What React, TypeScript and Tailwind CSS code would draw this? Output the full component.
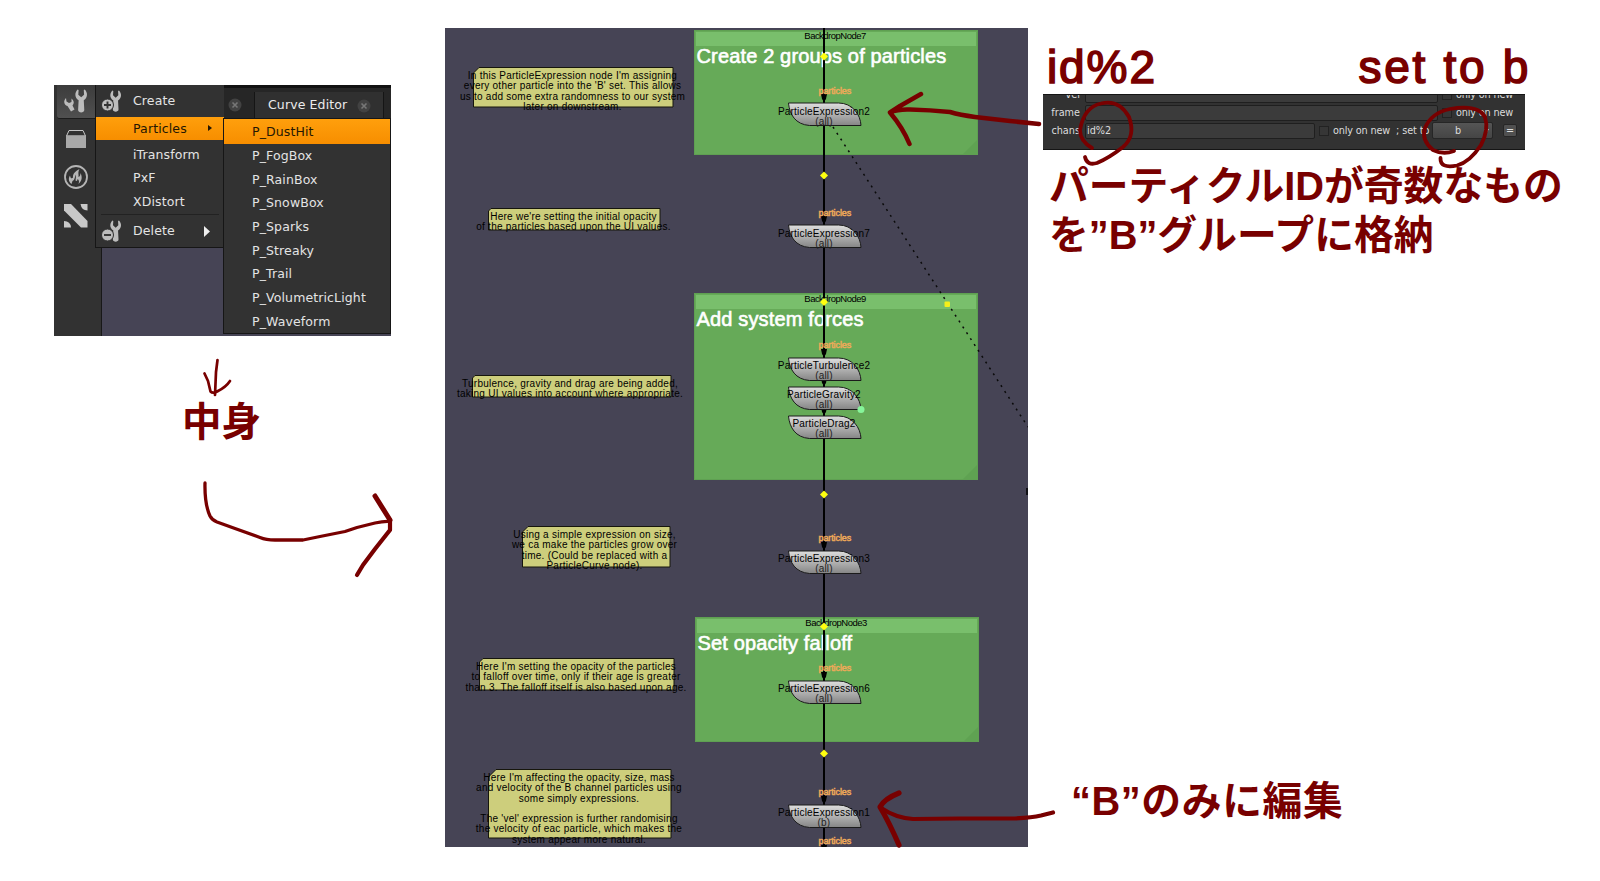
const ink = '#780000';

const submenu = [
  'P_DustHit',
  'P_FogBox',
  'P_RainBox',
  'P_SnowBox',
  'P_Sparks',
  'P_Streaky',
  'P_Trail',
  'P_VolumetricLight',
  'P_Waveform',
];

// canvas coordinates are relative to the node graph's own corner
const backdrops = [
  { name: 'BackdropNode7', title: 'Create 2 groups of particles', x: 249, y: 2, h: 125 },
  { name: 'BackdropNode9', title: 'Add system forces', x: 249, y: 265, h: 187 },
  { name: 'BackdropNode3', title: 'Set opacity falloff', x: 250, y: 589, h: 125 },
];

const notes = [
  {
    x: 28, y: 39, w: 201, h: 41, shift: -1, cut: 6,
    lines: [
      "In this ParticleExpression node I'm assigning",
      "every other particle into the 'B' set. This allows",
      'us to add some extra randomness to our system',
      'later on downstream.',
    ],
  },
  {
    x: 43, y: 180, w: 173, h: 23, shift: -1, cut: 3,
    lines: ["Here we're setting the initial opacity", 'of the particles based upon the UI values.'],
  },
  {
    x: 27, y: 347, w: 200, h: 23, shift: -2, cut: 3,
    lines: ['Turbulence, gravity and drag are being added,', 'taking UI values into account where appropriate.'],
  },
  {
    x: 77, y: 498, w: 149, h: 42, shift: -2, cut: 6,
    lines: ['Using a simple expression on size,', 'we ca make the particles grow over', 'time. (Could be replaced with a', 'ParticleCurve node).'],
  },
  {
    x: 34, y: 630, w: 196, h: 33, shift: -1, cut: 4,
    lines: ["Here I'm setting the opacity of the particles", 'to falloff over time, only if their age is greater', 'than 3. The falloff itself is also based upon age.'],
  },
  {
    x: 43, y: 741, w: 184, h: 70, shift: -1, cut: 8,
    lines: [
      "Here I'm affecting the opacity, size, mass",
      'and velocity of the B channel particles using',
      'some simply expressions.',
      '',
      "The 'vel' expression is further randomising",
      'the velocity of eac particle, which makes the',
      'system appear more natural.',
    ],
  },
];

const nodes = [
  { name: 'ParticleExpression2', channel: '(all)', y: 74, pad: 5 },
  { name: 'ParticleExpression7', channel: '(all)', y: 196, pad: 5 },
  { name: 'ParticleTurbulence2', channel: '(all)', y: 329, pad: 4 },
  { name: 'ParticleGravity2', channel: '(all)', y: 358, pad: 4 },
  { name: 'ParticleDrag2', channel: '(all)', y: 387, pad: 4 },
  { name: 'ParticleExpression3', channel: '(all)', y: 522, pad: 4 },
  { name: 'ParticleExpression6', channel: '(all)', y: 652, pad: 4 },
  { name: 'ParticleExpression1', channel: '(b)', y: 776, pad: 4 },
];

const inputLabels = [63, 185, 317, 510, 640, 764, 813];
const arrowTips = [74, 196, 329, 358, 387, 522, 652, 776, 825];
const wireDots = [28.5, 147.5, 274, 466.5, 598.5, 725.5];

function Wrench({ x, y, s }: { x: number; y: number; s: number }) {
  return (
    <path
      transform={`translate(${x} ${y}) scale(${s})`}
      d="M3 0C0 3 0 8 4 10.500L3.500 20C3.500 23 9.500 23 9.500 20L9 10.500C13 8 13 3 10 0L9 .5 9.300 5 6.500 7.500 3.700 5 4 .5Z"
      fill="#bdbdbd"
    />
  );
}

function ToolIcon({ sign }: { sign: '+' | '-' }) {
  return (
    <svg width="24" height="24" viewBox="0 0 24 24" className="shrink-0">
      <Wrench x={8.5} y={1.5} s={0.95} />
      <circle cx="6.500" cy="16" r="6" fill="#bdbdbd" stroke="#323232" strokeWidth="1" />
      <path d={sign === '+' ? 'M3 16h7M6.500 12.500v7' : 'M3 16h7'} stroke="#323232" strokeWidth="1.900" />
    </svg>
  );
}

function CloseDot() {
  return (
    <svg width="14" height="14" viewBox="0 0 14 14" className="shrink-0">
      <circle cx="7" cy="7" r="6.500" fill="#424242" />
      <path d="M4.500 4.500l5 5M9.500 4.500l-5 5" stroke="#777" strokeWidth="1.600" />
    </svg>
  );
}

function Sidebar() {
  return (
    <div className="flex h-full w-[48px] shrink-0 flex-col items-center border-r border-[#181818] bg-[#323232] pr-[3px]">
      <div className="ml-[6px] flex h-[34px] w-[44px] items-start rounded-b-[3px] border-b border-[#1c1c1c] bg-gradient-to-b from-[#3c3c3c] to-[#505050] pl-[7px] pt-[3px]">
        <svg width="26" height="26" viewBox="0 0 26 26">
          <Wrench x={10.5} y={1.5} s={1.03} />
          <path d="M2 10C-1 13 0 17 3.500 18L7 23.500 10.500 21.500 8.500 17.500C10.500 15.500 10 12.500 7.500 10.500L7.500 14 5 15 2.500 13.500Z" fill="#bdbdbd" />
        </svg>
      </div>
      <svg width="22" height="20" viewBox="0 0 22 20" className="mt-[10px]">
        <path d="M4 1.500h14L20.500 7h-19Z" fill="none" stroke="#c4c4c4" strokeWidth="1" />
        <path d="M1 6.500h20V19H1Z" fill="#a9a9a9" />
      </svg>
      <svg width="26" height="26" viewBox="0 0 26 26" className="mt-[15px]">
        <circle cx="13" cy="13" r="11" fill="none" stroke="#b5b5b5" strokeWidth="1.800" />
        <path d="M8.500 20C5 17 5.500 14 7 11.500C7.500 14.500 9 15 10 13.500C9.500 9.500 13 7 16.500 5C14.500 8.500 16 10.500 15.500 13C17 12.500 17.500 10.500 17.500 9C19.500 13 19 17 15.500 20C16.500 17.500 16 16 14.500 15C14.500 17 13.500 17.500 12.500 16.500C12.800 14.500 13 12.500 13 10.500C11.500 13 12 16 9.500 17Z" fill="#b5b5b5" />
      </svg>
      <svg width="24" height="24" viewBox="0 0 24 24" className="mt-[14px]">
        <path d="M0 0H7L23.500 17V23.500H17L0 6.500Z" fill="#c8c8c8" />
        <path d="M16.500 0H23.500V6.500Q17.500 6.500 16.500 0ZM0 17Q6.500 17 7 23.500H0Z" fill="#c8c8c8" />
      </svg>
    </div>
  );
}

function MenuShot() {
  return (
    <div className="relative flex h-[251px] w-[337px] overflow-hidden bg-[#464455] font-['DejaVu_Sans',sans-serif] text-[12.500px] tracking-[0.120px] text-[#e4e4e4]">
      <Sidebar />
      {/* tab bar */}
      <div className="flex h-[34px] flex-1 items-center border-b border-t-[3px] border-[#121212] bg-[#262626] pl-[126px] pt-[4px]">
        <CloseDot />
        <div className="ml-[12px] flex h-full w-[130px] items-center justify-between whitespace-nowrap border-x border-[#151515] bg-[#303030] pb-px pl-[13px] pr-[12px] pt-[2px] text-[#ececec]">
          Curve Editor
          <CloseDot />
        </div>
      </div>
      {/* toolbar menu */}
      <div className="absolute left-[41px] top-0 flex h-[163px] w-[129px] flex-col border-b border-l border-[#161616] bg-[#323232]">
        <div className="flex h-[33px] items-center gap-[8px] pl-[5px]">
          <ToolIcon sign="+" />
          <span>Create</span>
        </div>
        <div className="flex h-[23px] items-center bg-gradient-to-b from-[#ff9f0c] to-[#f78e00] pl-[37px] pt-[2px] text-[#241703]">
          <span>Particles</span>
          <svg width="5" height="6" viewBox="0 0 5 6" className="-mt-[2px] ml-[21px]">
            <path d="M0 0L4 3 0 6Z" fill="#241703" />
          </svg>
        </div>
        <div className="flex flex-col pl-[37px] pt-[3px]">
          {['iTransform', 'PxF', 'XDistort'].map((item) => (
            <span key={item} className="h-[23.700px] leading-[23.700px]">{item}</span>
          ))}
        </div>
        <div className="mx-[5px] border-t border-[#222]"></div>
        <div className="flex h-[33px] items-center gap-[8px] pl-[5px] pt-px">
          <ToolIcon sign="-" />
          <span className="w-[42px]">Delete</span>
          <svg width="8" height="11" viewBox="0 0 8 11" className="ml-[21px]">
            <path d="M0 0L6 5.500 0 11Z" fill="#eee" />
          </svg>
        </div>
      </div>
      {/* submenu */}
      <div className="absolute left-[169px] top-[33px] flex h-[216px] w-[168px] flex-col border border-[#161616] bg-[#323232]">
        {submenu.map((item, i) => (
          <span
            key={item}
            className={
              i === 0
                ? 'h-[25px] bg-gradient-to-b from-[#ff9f0c] to-[#f78e00] pl-[28px] leading-[26px] text-[#241703]'
                : 'h-[23.700px] pl-[28px] leading-[23.700px]'
            }
          >
            {item}
          </span>
        ))}
      </div>
    </div>
  );
}

function NodeGraph() {
  return (
    <div className="relative mt-[28px] h-[819px] w-[583px] shrink-0 overflow-hidden bg-[#464455] font-['Liberation_Sans',Arial,sans-serif] text-black">
      {backdrops.map((b) => (
        <div
          key={b.name}
          className="absolute w-[284px] border border-[#5fa052] bg-[#66aa58] px-px pt-px"
          style={{ left: b.x, top: b.y, height: b.h }}
        >
          <div className="h-[14px] bg-[#79bf6c] pr-[2px] text-center text-[9.500px] leading-[8px] tracking-[-0.520px]">{b.name}</div>
          <svg width="14" height="14" className="absolute bottom-0 right-0">
            <path d="M0 14L14 0V14Z" fill="#5fa252" />
          </svg>
        </div>
      ))}

      {notes.map((n) => (
        <div key={n.y} className="absolute" style={{ left: n.x, top: n.y, width: n.w, height: n.h }}>
          <svg width={n.w} height={n.h} className="absolute inset-0">
            <path
              d={`M${n.cut} .5H${n.w - 1}V${n.h - 1}H.5V${n.cut}Z`}
              fill="#cdce7c"
              stroke="#16160c"
              strokeWidth="1"
            />
          </svg>
          <div className="relative flex flex-col items-center pt-[4px]" style={{ left: n.shift }}>
            {n.lines.map((line, i) => (
              <span key={i} className="h-[10.250px] whitespace-nowrap text-[10px] leading-[10.250px] tracking-[0.250px]">
                {line}
              </span>
            ))}
          </div>
        </div>
      ))}

      {backdrops.map((b) => (
        <div
          key={b.title}
          className="absolute whitespace-nowrap text-[20px] leading-[24px] tracking-[0.150px] text-white [-webkit-text-stroke:0.600px_white]"
          style={{ left: b.x + 2.5, top: b.y + 14 }}
        >
          {b.title}
        </div>
      ))}

      {/* wires */}
      <svg width="583" height="819" className="absolute inset-0">
        <defs>
          <linearGradient id="node" x1="0" y1="0" x2="0" y2="1">
            <stop offset="0" stopColor="#dedede" />
            <stop offset="1" stopColor="#858585" />
          </linearGradient>
        </defs>
        <path d="M379 0V819" stroke="#000" strokeWidth="2" />
        <path d="M388 99L583 399" stroke="#0a0a0a" strokeWidth="1.500" strokeDasharray="2 5" />
        <path d="M582 460v7" stroke="#000" strokeWidth="1.500" />
        {arrowTips.map((y) => (
          <path key={y} d={`M376 ${y - 8}h6l-1 5-2 3-2-3Z`} fill="#000" />
        ))}
        {nodes.map((n) => (
          <path
            key={n.y}
            transform={`translate(343.500 ${n.y + 0.5})`}
            d="M0 .5H50C64 .5 72 12 72.500 23H21C7 22 1 12 0 .5Z"
            fill="url(#node)"
            stroke="#1b1b1b"
            strokeWidth="1"
          />
        ))}
        {wireDots.map((y) => (
          <path key={y} d={`M379 ${y - 4}l4 4-4 4-4-4Z`} fill="#ffff10" />
        ))}
        <rect x="499.500" y="273.500" width="5.500" height="5.500" rx="1" fill="#f4ef1a" />
        <circle cx="416" cy="381.500" r="3.500" fill="#86f59a" />
      </svg>

      {nodes.map((n) => (
        <div
          key={n.name}
          className="absolute left-[319px] flex w-[120px] flex-col items-center text-[10px] leading-[10.300px] tracking-[0.200px]"
          style={{ top: n.y + n.pad }}
        >
          <span>{n.name}</span>
          <span className="text-[#222]">{n.channel}</span>
        </div>
      ))}

      {inputLabels.map((y) => (
        <div
          key={y}
          className="absolute left-[373.500px] text-[9px] leading-[10px] tracking-[-0.100px] text-[#eda959] [-webkit-text-stroke:0.500px_#eda959]"
          style={{ top: y - 5.5 }}
        >
          particles
        </div>
      ))}
    </div>
  );
}

const field = 'h-[16px] rounded-[2px] border border-[#1f1f1f] bg-[#3b3b3b]';

function Check() {
  return <span className="h-[10px] w-[10px] shrink-0 border border-[#222] bg-[#363636]"></span>;
}

function PropertyPanel() {
  return (
    <div className="h-[56px] w-[482px] overflow-hidden border-y border-[#151515] bg-[#323232] font-['DejaVu_Sans',sans-serif] text-[9.700px] leading-none text-[#dcdcdc]">
      <div className="-mt-[8px] flex flex-col gap-[1.500px]">
        {['vel', 'frame'].map((label) => (
          <div key={label} className="flex h-[16px] items-center whitespace-nowrap">
            <span className="mr-[5px] w-[37px] text-right">{label}</span>
            <span className={`${field} mr-[4px] w-[353px]`}></span>
            <Check />
            <span className="ml-[4px] tracking-[-0.150px]">only on new</span>
          </div>
        ))}
        <div className="flex h-[17px] items-center whitespace-nowrap">
          <span className="mr-[5px] w-[37px] text-right">chans</span>
          <span className={`${field} mr-[4px] w-[230px] pl-[1px] leading-[14px]`}>id%2</span>
          <Check />
          <span className="ml-[4px] tracking-[-0.150px]">only on new</span>
          <span className="ml-[6px] w-[36px] tracking-[-0.100px]">; set to</span>
          <span className="flex h-[17px] w-[61px] items-center rounded-[2px] border border-[#262626] bg-gradient-to-b from-[#555] to-[#454545] pl-[22px]">
            b
            <svg width="5" height="4" viewBox="0 0 5 4" className="ml-[23px]">
              <path d="M0 0H5L2.500 4Z" fill="#c8c8c8" />
            </svg>
          </span>
          <span className="ml-[10px] flex h-[13px] w-[14px] items-center justify-center rounded-[2px] border border-[#262626] bg-[#505050]">=</span>
        </div>
      </div>
    </div>
  );
}

// freehand pen strokes drawn over everything
function Ink() {
  return (
    <svg
      width="1600"
      height="881"
      className="pointer-events-none absolute inset-0"
      fill="none"
      stroke={ink}
      strokeLinecap="round"
      strokeLinejoin="round"
    >
      <g strokeWidth="2.700">
        <path d="M217.500 360L216 372 215 395M204.500 373.500L208 381 210.500 391.500Q213 394 218 391 226 387 230 381" />
        <path d="M205 483Q204.500 504 210 516 212 520 217 522L235 528.500 260 537.500Q266 540 275 540H303L320 536.500 345 531.500 357 527.500 375 523Q384 521 390 521.500" strokeWidth="3.300" />
      </g>
      <g strokeWidth="4.500">
        <path d="M375 496L390 520" strokeWidth="5" />
        <path d="M390 520V530L375 549 363 565 357 575" strokeWidth="4.200" />
        <path d="M1039 124L1010 121 975 117Q960 115 950 112 930 110 910 109.500 898 109 890 112.500M921 94L900 106 890 112.500Q903 128 909.500 144" />
        <path d="M1053 812.500L1041 815.500Q1032 817.500 1015 818.500L960 818.500 913 819Q896 818 881 808" strokeWidth="4.200" />
        <path d="M899 793Q884 799 880 807 889 822 899 845" strokeWidth="5.200" />
      </g>
      <g strokeWidth="3.800">
        <path d="M1092 148Q1080 141 1080 130 1084 107 1101 103.500 1119 99 1129 117 1136 136 1123 147 1109 158 1097 163 1087 166 1085 157" />
        <path d="M1454 151Q1443 155 1433 150 1421 140 1425 128 1431 113 1450 109 1478 104 1485 117 1489 130 1481 145 1470 162 1457 165.500 1440 169 1440.500 158" />
      </g>
    </svg>
  );
}

export default function App() {
  return (
    <div className="relative flex h-[881px] w-[1600px] items-start overflow-hidden bg-white">
      <div className="flex w-[445px] shrink-0 flex-col pl-[54px] pt-[85px]">
        <MenuShot />
        <div className="ml-[128px] mt-[54px] font-['Noto_Sans_CJK_JP',sans-serif] text-[39.500px] font-bold leading-[58px] text-[#780000]">中身</div>
      </div>

      <NodeGraph />

      <div className="flex w-[560px] flex-col pl-[15px] text-[#780000]">
        <div className="flex h-[94px] justify-between pl-[4px] pt-[41px] font-['Liberation_Sans',Arial,sans-serif] text-[46px] leading-[52px] [-webkit-text-stroke:1.600px_#780000]">
          <span className="tracking-[1.900px]">id%2</span>
          <span className="mr-[57px] tracking-[2.700px]">set to b</span>
        </div>
        <PropertyPanel />
        <div className="mt-[12px] whitespace-nowrap pl-[6px] font-['Liberation_Sans','Noto_Sans_CJK_JP',sans-serif] text-[39.800px] font-bold leading-[49px]">
          <p>パーティクルIDが奇数なもの</p>
          <p>を”B”グループに格納</p>
        </div>
        <div className="mt-[517px] whitespace-nowrap pl-[28px] font-['Liberation_Sans','Noto_Sans_CJK_JP',sans-serif] text-[39.800px] font-bold leading-[49px] tracking-[0.600px]">
          “B”のみに編集
        </div>
      </div>

      <Ink />
    </div>
  );
}
